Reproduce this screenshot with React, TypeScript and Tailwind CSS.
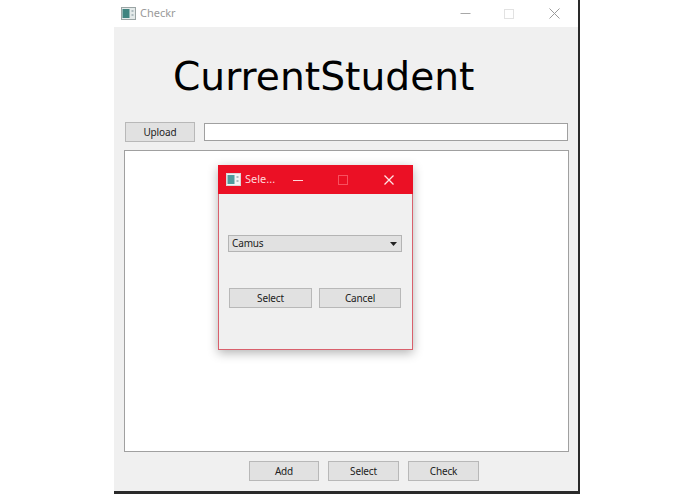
import React from "react";

function AppIcon({ light = false }: { light?: boolean }) {
  return (
    <svg width="15" height="13" viewBox="0 0 15 13" className="shrink-0">
      <rect x="0.5" y="0.5" width="14" height="12" fill={light ? "#f4f4f4" : "#e4eaea"} stroke={light ? "#d8d8d8" : "#9aa4a4"} />
      <rect x="1.5" y="2" width="7" height="9" fill={light ? "#4f9a9c" : "#3f8480"} />
      <rect x="10.5" y="3" width="2" height="2" fill="#aebcc0" />
      <rect x="10.5" y="7" width="2" height="2" fill="#aebcc0" />
    </svg>
  );
}

function Btn({ label, className }: { label: string; className: string }) {
  return (
    <div className={`flex items-center justify-center border border-[#b8b8b8] bg-[#e1e1e1] text-[10px] tracking-[-0.15px] text-[#222] ${className}`}>
      {label}
    </div>
  );
}

export default function App() {
  return (
    <div className="w-[695px] h-[494px] bg-white overflow-hidden font-['Noto_Sans','Liberation_Sans',sans-serif]">
      <div className="relative ml-[114px] w-[466px] h-[494px] flex flex-col border-r-2 border-b-[3px] border-[#2a2a2a]">
        <div className="h-[27px] flex items-center bg-white pl-[7px] shrink-0">
          <AppIcon />
          <span className="ml-[4px] text-[11px] text-[#9a9a9a]">Checkr</span>
          <div className="ml-auto flex items-center">
            <svg width="11" height="11" viewBox="0 0 11 11" className="mr-[33px]">
              <path d="M0.5 5.5H10.5" stroke="#a8a8a8" strokeWidth="1" />
            </svg>
            <svg width="10" height="10" viewBox="0 0 10 10" className="mr-[35px]">
              <rect x="0.5" y="0.5" width="9" height="9" fill="none" stroke="#e2e2e2" />
            </svg>
            <svg width="11" height="11" viewBox="0 0 11 11" className="mr-[18px]">
              <path d="M0.5 0.5L10.5 10.5M10.5 0.5L0.5 10.5" stroke="#9a9a9a" strokeWidth="1" />
            </svg>
          </div>
        </div>

        <div className="flex-1 bg-[#f0f0f0] flex flex-col px-[10px]">
          <div className="h-[95px] pt-[21px] pl-[49px] shrink-0">
            <div className="font-['DejaVu_Sans',sans-serif] text-[39.2px] leading-[58px] text-black whitespace-nowrap">CurrentStudent</div>
          </div>
          <div className="flex items-center gap-[9px] pl-[1px] shrink-0">
            <Btn label="Upload" className="w-[70px] h-[20px]" />
            <div className="w-[365px] h-[18px] bg-white border border-[#a0a0a0]" />
          </div>
          <div className="mt-[8px] w-[445px] h-[302px] bg-white border border-[#a0a0a0] shrink-0" />
          <div className="mt-[9px] ml-[125px] flex gap-[9px] shrink-0">
            <Btn label="Add" className="w-[70px] h-[20px]" />
            <Btn label="Select" className="w-[71px] h-[20px]" />
            <Btn label="Check" className="w-[71px] h-[20px]" />
          </div>
        </div>

        <div className="absolute left-[104px] top-[165px] w-[195px] h-[185px] flex flex-col bg-[#f0f0f0] border border-[#d9606c] shadow-[0_3px_10px_rgba(0,0,0,0.3)]">
          <div className="h-[29px] -mx-px -mt-px bg-[#eb1025] flex items-center pl-[8px] shrink-0">
            <AppIcon light />
            <span className="ml-[4px] text-[11px] text-[#ffd6da]">Sele...</span>
            <svg width="10" height="10" viewBox="0 0 10 10" className="ml-[18px]">
              <path d="M0 5.5H10" stroke="#ffd6da" strokeWidth="1" />
            </svg>
            <svg width="10" height="10" viewBox="0 0 10 10" className="ml-[35px]">
              <rect x="0.5" y="0.5" width="9" height="9" fill="none" stroke="#f8505f" />
            </svg>
            <svg width="10" height="10" viewBox="0 0 10 10" className="ml-[36px]">
              <path d="M0.5 0.5L9.5 9.5M9.5 0.5L0.5 9.5" stroke="#ffe4e6" strokeWidth="1.3" />
            </svg>
          </div>
          <div className="mt-[41px] ml-[9px] mr-[10px] h-[17px] bg-[#e1e1e1] border border-[#b4b4b4] flex items-center pl-[3px] pr-[4px] text-[10px] tracking-[-0.15px] text-[#222]">
            <span>Camus</span>
            <svg width="7" height="4" viewBox="0 0 7 4" className="ml-auto">
              <path d="M0 0H7L3.5 4Z" fill="#222" />
            </svg>
          </div>
          <div className="mt-[36px] mx-[10px] flex gap-[7px]">
            <Btn label="Select" className="w-[83px] h-[20px]" />
            <Btn label="Cancel" className="w-[82px] h-[20px]" />
          </div>
        </div>
      </div>
    </div>
  );
}
